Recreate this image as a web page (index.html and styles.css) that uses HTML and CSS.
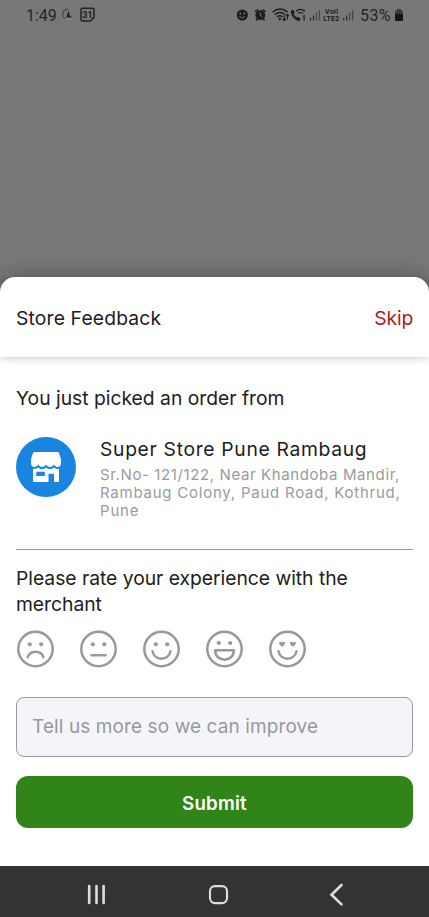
FILE: index.html
```html
<!DOCTYPE html>
<html lang="en">
<head>
<meta charset="utf-8">
<meta name="viewport" content="width=device-width, initial-scale=1">
<title>Store Feedback</title>
<link rel="stylesheet" href="styles.css">
</head>
<body>
<div class="phone">
  <header class="status">
    <span class="clock">1:49</span>
    <svg class="status-left" width="36" height="18" viewBox="0 0 36 18">
      <path d="M8.5 3.5C2.5 2.5 1 10 5.5 13" fill="none" stroke="#444" stroke-width="1.1"/>
      <path d="M8.5 4.5L6.2 11.5H12L9.8 9.5Z" fill="#2b1d1f"/>
      <path d="M5 13h7" stroke="#999" stroke-width=".8"/>
      <path d="M22.5 2.2h10q1.5 0 1.5 1.5v7.7l-3.6 3.6h-7.9q-1.5 0-1.5-1.5V3.7q0-1.5 1.5-1.5z" fill="none" stroke="#222" stroke-width="1.5"/>
      <text class="date" x="27.5" y="11.6" text-anchor="middle">31</text>
    </svg>
    <svg class="status-right" width="120" height="18" viewBox="236 6 120 18">
      <circle cx="242.3" cy="15" r="5.6" fill="#1d1d1d"/>
      <circle cx="240.3" cy="13.5" r=".9" fill="#777"/><circle cx="244.3" cy="13.5" r=".9" fill="#777"/>
      <path d="M239.5 16.4q2.8 3 5.6 0" fill="none" stroke="#777" stroke-width="1"/>
      <circle cx="260.3" cy="15.2" r="4.9" fill="#1d1d1d"/>
      <path d="M255 11.8l3-2.3M265.6 11.8l-3-2.3M257.3 19l-1.2 1.5M263.3 19l1.2 1.5" stroke="#1d1d1d" stroke-width="1.5"/>
      <path d="M260.3 12.4v3l2 1.2" fill="none" stroke="#777"/>
      <g fill="none" stroke="#1d1d1d" stroke-width="1.4">
        <path d="M272.5 12.2q7.8-6.5 15.2 0M274.7 14.7q5.2-4.3 10.4 0M277 17q2.9-2.4 5.6 0"/>
        <path d="M292.3 10.2c-1.2 4.3 2.9 9.3 7.6 9.7" stroke-width="2.2"/>
        <path d="M292.1 10.4l2 2.8M297.2 17.2l2.9 2.4" stroke-width="2"/>
        <path d="M296 11.2q4.5-3.6 9 0M298 13.5q2.5-2 5 0" stroke-width="1.2"/>
      </g>
      <circle cx="279.8" cy="19" r="1.2" fill="#1d1d1d"/>
      <path d="M284.3 15.5v5m-1.7-1.7l1.7 1.8 1.7-1.8M287.4 19.5v-5m-1.5 1.7l1.5-1.8 1.5 1.8M303 16.4l1.1-.7v5" fill="none" stroke="#1d1d1d" stroke-width="1.1"/>
      <g stroke="#252525" stroke-width="1.2">
        <path d="M310.5 18v2.5M313.5 15.5v5M343.7 18v2.5M346.7 15.5v5"/>
        <path d="M316.5 12.5v8M319.5 10v10.5M349.7 12.5v8M352.7 10v10.5" stroke="#454545"/>
      </g>
      <text class="lte" x="325" y="14" textLength="9">Vo</text>
      <path d="M335 9.5v4M336.8 8.8q1.5 2.6 0 5.2" fill="none" stroke="#1d1d1d"/>
      <text class="lte" x="323.2" y="20.8" textLength="16">LTE2</text>
    </svg>
    <span class="percent">53%</span>
    <svg class="battery" width="10" height="14" viewBox="0 0 10 14">
      <path d="M3 1h4v1.5h1q1 0 1 1v8.5q0 1-1 1H2q-1 0-1-1V3.5q0-1 1-1h1z" fill="#3b3b3b"/>
      <path d="M1 6h8v6q0 1-1 1H2q-1 0-1-1z" fill="#161616"/>
    </svg>
  </header>

  <main class="sheet">
    <div class="sheet-head">
      <h1 class="title">Store Feedback</h1>
      <a class="skip">Skip</a>
    </div>
    <div class="content">
      <h2 class="intro">You just picked an order from</h2>
      <section class="store">
        <svg class="store-icon" width="60" height="60" viewBox="0 0 60 60">
          <circle cx="30" cy="30" r="30" fill="#1985e0"/>
          <path d="M18.5 15h23q1.2 0 1.6 1.2L45 22v4q0 4-3.3 4-3 0-4-2.4Q36.5 30.3 33.8 30q-2.7 0-3.8-2.4-1.1 2.4-3.8 2.4-2.7.3-3.9-2.4-1 2.4-4 2.4Q15 30 15 26v-4l1.9-5.8q.4-1.2 1.6-1.2z" fill="#fff"/>
          <path d="M17 31.8q3.3.6 5.3-1.3 2 2 4 1.6 2.3 0 3.7-1.6 1.5 1.6 3.8 1.6 2 .4 4-1.6 2 1.9 5.2 1.3V44q0 1-1 1h-4v-8.2h-5.5V45H18q-1 0-1-1z" fill="#fff"/>
          <rect x="20.3" y="34.8" width="8.5" height="4.1" rx=".5" fill="#1985e0"/>
        </svg>
        <div class="store-text">
          <h3 class="store-name">Super Store Pune Rambaug</h3>
          <p class="address"><span class="a1">Sr.No- 121/122, Near Khandoba Mandir,</span><br><span class="a2">Rambaug Colony, Paud Road, Kothrud,</span><br><span class="a3">Pune</span></p>
        </div>
      </section>
      <p class="question">Please rate your experience with the<br>merchant</p>
      <div class="faces">
        <svg class="face" viewBox="-.5 0 38 38"><circle cx="19" cy="19" r="17.2"/><circle class="eye" cx="13.3" cy="14.3" r="2.1"/><circle class="eye" cx="24.7" cy="14.3" r="2.1"/><path d="M11.2 27.2c2.5-7.3 13.2-7.3 15.7 0"/></svg>
        <svg class="face" viewBox="-.5 0 38 38"><circle cx="19" cy="19" r="17.2"/><circle class="eye" cx="13.3" cy="14.3" r="2.1"/><circle class="eye" cx="24.7" cy="14.3" r="2.1"/><path d="M12.2 25.3h13.9"/></svg>
        <svg class="face" viewBox="-.5 0 38 38"><circle cx="19" cy="19" r="17.2"/><circle class="eye" cx="13.3" cy="14.3" r="2.1"/><circle class="eye" cx="24.7" cy="14.3" r="2.1"/><path d="M10 21.3c2 9.8 16 9.8 18 0"/></svg>
        <svg class="face" viewBox="-.5 0 38 38"><circle cx="19" cy="19" r="17.2"/><circle class="eye" cx="13.3" cy="13" r="2.1"/><circle class="eye" cx="24.7" cy="13" r="2.1"/><path d="M9.7 20.2h18.6c0 12.6-18.6 12.6-18.6 0z"/></svg>
        <svg class="face" viewBox="-.5 0 38 38"><circle cx="19" cy="19" r="17.2"/><path class="eye" d="M13.6 17l-2.7-2.8c-1.2-2.3 1.6-3.3 2.7-1.5 1.1-1.8 3.9-.8 2.7 1.5zM24.4 17l-2.7-2.8c-1.2-2.3 1.6-3.3 2.7-1.5 1.1-1.8 3.9-.8 2.7 1.5z"/><path d="M10 21.3c2 9.8 16 9.8 18 0"/></svg>
      </div>
      <div class="field"><span>Tell us more so we can improve</span></div>
      <button class="submit"><span>Submit</span></button>
    </div>
  </main>

  <nav class="nav">
    <svg width="429" height="51" viewBox="0 0 429 51" fill="none" stroke="#ddd">
      <path d="M89.2 20v17M96.5 20v17M103.6 20v17" stroke-width="2.6" stroke-linecap="round"/>
      <rect x="210" y="20.1" width="17" height="17" rx="5" stroke-width="2.1"/>
      <path d="M341.5 19l-10 9.7 10 9.7" stroke-width="2.6" stroke-linecap="round"/>
    </svg>
  </nav>
</div>
</body>
</html>
```
FILE: styles.css
```css
* { box-sizing: border-box; }
body { margin: 0; font-family: Inter, "Liberation Sans", sans-serif; color: #202020; background: #787878; }
h1, h2, h3, p { margin: 0; font-weight: 400; white-space: nowrap; }
.phone { width: 429px; height: 917px; display: flex; flex-direction: column; background: #787878; overflow: hidden; }

.status { height: 277px; flex: none; display: flex; align-items: flex-start; padding: 6px 25px 0 26px; color: #252525; font-family: Roboto, sans-serif; font-size: 16px; line-height: 19px; }
.clock { width: 34px; }
.status-left { flex: none; }
.date { font: 700 9px Roboto, sans-serif; fill: #222; }
.status-right { flex: none; margin-left: auto; }
.lte { font: 700 7px Roboto, sans-serif; fill: #1d1d1d; }
.percent { width: 34px; margin-left: 4px; letter-spacing: .4px; }
.battery { flex: none; margin-top: 2px; }

.sheet { height: 589px; flex: none; background: #fff; border-radius: 15px 15px 0 0; box-shadow: 0 0 22px rgba(0, 0, 0, .32); }
.sheet-head { height: 80px; display: flex; justify-content: space-between; align-items: center; padding: 2px 16px 0; box-shadow: 0 1px 9px rgba(0, 0, 0, .2); clip-path: inset(0 0 -14px 0); border-radius: 15px 15px 0 0; }
.title, .skip, .intro, .question { font-size: 19.3px; line-height: 26px; }
.title { letter-spacing: .16px; }
.intro { letter-spacing: 0; }
.question { letter-spacing: -.02px; }
.skip { color: #b0191f; letter-spacing: -.2px; }
.content { padding: 28px 16px 0; }
.store { display: flex; gap: 24px; height: 126px; margin-top: 13px; padding-top: 13px; margin-bottom: 15px; border-bottom: 1px solid #979797; }
.store-icon { flex: none; }
.store-name { font-size: 19.3px; line-height: 24px; letter-spacing: .68px; color: #1c1c1c; }
.address { margin-top: 5px; font-size: 15px; line-height: 18px; color: #9b9b9b; }
.a1 { letter-spacing: .61px; }
.a2 { letter-spacing: .76px; }
.a3 { letter-spacing: .8px; }
.faces { display: flex; gap: 25px; margin-top: 13px; }
.face { width: 38px; height: 38px; flex: none; fill: none; stroke: #999; stroke-width: 2.5; stroke-linecap: round; stroke-linejoin: round; }
.face .eye { fill: #999; stroke: none; }
.field { height: 60px; margin-top: 29px; padding: 0 15px 2px; display: flex; align-items: center; border: 1px solid #999; border-radius: 8px; background: #f4f5fb; color: #999; font-size: 19px; letter-spacing: .1px; white-space: nowrap; }
.submit { display: flex; align-items: center; justify-content: center; width: 100%; height: 52px; margin-top: 19px; padding: 2px 0 0; border: 0; border-radius: 12px; background: #318418; color: #fff; font: 600 18.7px Inter, sans-serif; letter-spacing: .2px; }
.nav { height: 51px; flex: none; background: #333; }
.nav svg { display: block; }
```
